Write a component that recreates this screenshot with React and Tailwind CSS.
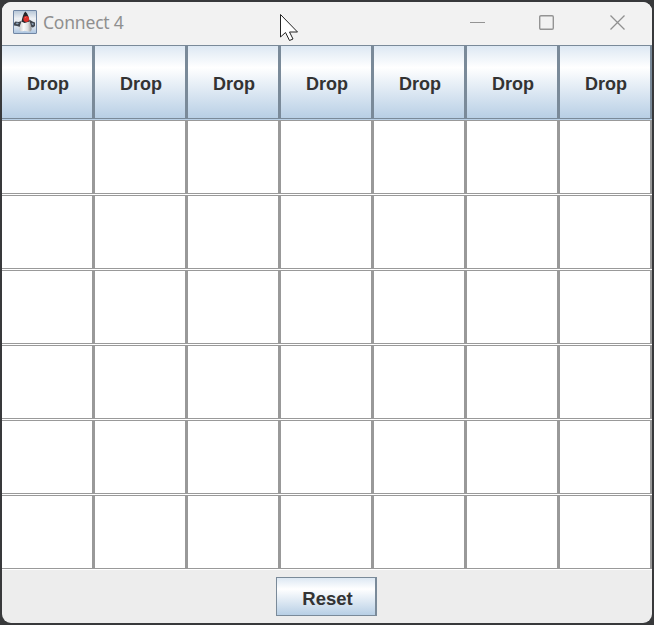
const COLUMNS = [0, 1, 2, 3, 4, 5, 6];
const ROWS = [0, 1, 2, 3, 4, 5];

function DukeIcon() {
  return (
    <svg width="24" height="24" viewBox="0 0 24 24" className="block shrink-0">
      <defs>
        <linearGradient id="sky" x1="0" y1="0" x2="0" y2="1">
          <stop offset="0" stopColor="#b5c5d6" />
          <stop offset="0.35" stopColor="#eef1f4" />
          <stop offset="0.75" stopColor="#d5dfea" />
          <stop offset="1" stopColor="#a9c3e0" />
        </linearGradient>
        <linearGradient id="body" x1="0" y1="0" x2="1" y2="0">
          <stop offset="0" stopColor="#c9c9c9" />
          <stop offset="0.35" stopColor="#fafafa" />
          <stop offset="0.7" stopColor="#dedede" />
          <stop offset="1" stopColor="#8f8f8f" />
        </linearGradient>
      </defs>
      <rect x="0.5" y="0.5" width="23" height="23" rx="0.5" fill="url(#sky)" stroke="#7187a5" />
      <path d="M1 13l1.500-1.500 3 .5 3-1 .5 3-2 3-3-1-3-.5z" fill="#40464e" />
      <path d="M15 11l2-1 2.500 1.500 2.500 1v3.500l-2 1.500-4-1z" fill="#40464e" />
      <path d="M2.500 13l2-.5 1.500 1.200-2 .8z" fill="#8da3ba" />
      <path d="M18.500 13l2 .3v1.900l-1.500-.4z" fill="#8da3ba" />
      <path d="M9.200 10.500c-1.500 2.500-3 6.500-2.800 9 .3 2.500 3 2 4.800 1.200 2-.3 4 1.300 6.300.8 2.300-1.500.7-6.500-1.300-11z" fill="url(#body)" />
      <path d="M12.300 1.500C10 4 9.500 7.500 8.500 11.500l3 1.500 5-1.500c-.3-4-1.500-7.500-4.200-10z" fill="#26262a" />
      <circle cx="13.200" cy="9" r="2.900" fill="#dd302a" />
      <path d="M12 8l1.300-1" stroke="#f0685f" />
    </svg>
  );
}

function TitleBar() {
  return (
    <div className="flex h-[43px] shrink-0 items-center bg-[#f2f2f2] pl-[11px] text-[#8f8f8f]">
      <div className="-mt-[3px]"><DukeIcon /></div>
      <div className="-mt-[4px] ml-[6px] font-['Noto_Sans','Open_Sans',sans-serif] text-[17.500px] leading-6 tracking-[-0.2px] whitespace-nowrap">
        Connect 4
      </div>
      <div className="-mt-[2px] ml-auto flex items-center pr-[27px]">
        <svg width="15" height="15" viewBox="0 0 15 15" className="mr-[54px]">
          <path d="M0 7.500h15" stroke="#949494" />
        </svg>
        <svg width="15" height="15" viewBox="0 0 15 15" className="mr-[56px]">
          <rect x="0.700" y="0.700" width="13.600" height="13.600" rx="1.200" fill="none" stroke="#949494" strokeWidth="1.400" />
        </svg>
        <svg width="15" height="15" viewBox="0 0 15 15">
          <path d="M0.500 0.500l14 14M14.500 0.500l-14 14" stroke="#909090" strokeWidth="1.300" />
        </svg>
      </div>
    </div>
  );
}

export default function App() {
  return (
    <div className="relative h-[625px] w-[654px] overflow-hidden bg-[#38393b] p-[2px] font-['Liberation_Sans',Arial,sans-serif]">
      <div className="flex h-[621px] w-[650px] flex-col overflow-hidden rounded-[9px] bg-[#ededed]">
        <TitleBar />
        <div className="flex w-[651px] shrink-0 bg-[#b8cfe5] pb-px">
          {COLUMNS.map((c) => (
            <button
              key={c}
              className="h-[74px] w-[93px] border-y border-r-3 border-[#7a8a99] bg-linear-to-b from-[#dde8f3] via-white via-30% to-[#b8cfe5] pt-[3px] pl-[2px] text-center text-[18px] leading-6 font-bold text-[#333333]"
            >
              Drop
            </button>
          ))}
        </div>
        {ROWS.map((r) => (
          <div key={r} className="flex w-[651px] shrink-0 bg-white pb-px">
            {COLUMNS.map((c) => (
              <div key={c} className="h-[74px] w-[93px] border-y border-r-3 border-[#999999] bg-white" />
            ))}
          </div>
        ))}
        <div className="flex grow justify-center pt-[7px] pr-px">
          <button className="h-[39px] w-[101px] border border-r-2 border-[#7a8a99] bg-linear-to-b from-[#dde8f3] via-white via-30% to-[#b8cfe5] pt-[5px] pl-[3px] text-[18.500px] leading-6 font-bold text-[#333333]">
            Reset
          </button>
        </div>
      </div>
      <svg width="20" height="30" viewBox="0 0 20 30" className="absolute top-[13px] left-[280px]">
        <path d="M0.500 1.500v22.500l5-4.500 4 8 3.500-1.500-3.500-7h8z" fill="white" stroke="#222222" strokeWidth="1" />
      </svg>
    </div>
  );
}
